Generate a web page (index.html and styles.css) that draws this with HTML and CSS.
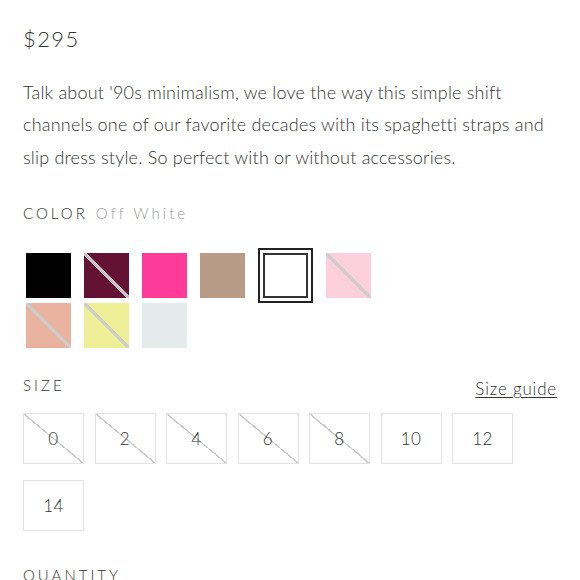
FILE: index.html
```html
<!DOCTYPE html>
<html lang="en">
<head>
<meta charset="utf-8">
<link rel="stylesheet" href="styles.css">
</head>
<body>
<main class="product">
  <div class="price">$295</div>
  <p class="desc">Talk about '90s minimalism, we love the way this simple shift channels one of our favorite decades with its spaghetti straps and slip dress style. So perfect with or without accessories.</p>

  <div class="label color-label">COLOR <span class="value">Off White</span></div>
  <div class="swatches">
    <span class="swatch black"></span>
    <span class="swatch burgundy na"></span>
    <span class="swatch hotpink"></span>
    <span class="swatch taupe"></span>
    <span class="selected"><span class="swatch white"></span></span>
    <span class="swatch lightpink na"></span>
    <span class="swatch peach na"></span>
    <span class="swatch yellow na"></span>
    <span class="swatch mist"></span>
  </div>

  <div class="size-head">
    <span class="label">SIZE</span>
    <a class="guide" href="#">Size guide</a>
  </div>
  <div class="sizes">
    <span class="size na">0</span>
    <span class="size na">2</span>
    <span class="size na">4</span>
    <span class="size na">6</span>
    <span class="size na">8</span>
    <span class="size">10</span>
    <span class="size">12</span>
    <span class="size">14</span>
  </div>

  <div class="label qty-label">QUANTITY</div>
</main>
</body>
</html>
```
FILE: styles.css
```css
html, body {
  margin: 0;
  padding: 0;
  background: #fff;
}
body {
  font-family: Lato, "Open Sans", sans-serif;
  font-weight: 300;
  color: #333;
}
.product {
  padding: 24px 23px 0 23px;
}
.price {
  font-size: 22px;
  line-height: 30px;
  letter-spacing: 1.4px;
  color: #333;
}
.desc {
  margin: 22px 0 0 0;
  font-size: 18px;
  line-height: 32.3px;
  color: #333;
  letter-spacing: 0.2px;
}
.label {
  font-size: 15px;
  line-height: 20px;
  letter-spacing: 3px;
  color: #333;
  font-weight: 300;
}
.color-label {
  margin-top: 30px;
}
.value {
  color: #999;
  margin-left: 1px;
}
.swatches {
  margin-top: 25px;
  padding-left: 3px;
  display: flex;
  flex-wrap: wrap;
  align-items: center;
  column-gap: 13px;
  width: 360px;
}
.swatch {
  display: block;
  width: 45px;
  height: 45px;
  box-sizing: border-box;
}
.swatch.na {
  background-image: linear-gradient(to top right, transparent calc(50% - 1.6px), rgba(205,205,205,0.95) calc(50% - 1.6px), rgba(205,205,205,0.95) calc(50% + 1.6px), transparent calc(50% + 1.6px));
}
.black { background-color: #000; }
.burgundy { background-color: #631234; }
.hotpink { background-color: #fe3b98; }
.taupe { background-color: #b89b86; }
.white { background-color: #fff; border: 2px solid #333; }
.lightpink { background-color: #fccfdc; }
.peach { background-color: #e8b29f; }
.yellow { background-color: #eeee96; }
.mist { background-color: #e5eaea; }
.selected {
  display: block;
  border: 2px solid #222;
  padding: 3px;
}
.size-head {
  margin-top: 27px;
  display: flex;
  justify-content: space-between;
  align-items: flex-start;
}
.guide {
  margin-top: 4px;
  font-size: 17px;
  line-height: 20px;
  color: #333;
  letter-spacing: 0.8px;
  text-decoration: underline;
  text-underline-offset: 2px;
  text-decoration-thickness: 1px;
}
.sizes {
  margin-top: 14px;
  display: flex;
  flex-wrap: wrap;
  column-gap: 10.5px;
  row-gap: 16px;
}
.size {
  width: 61px;
  height: 51px;
  box-sizing: border-box;
  border: 1px solid #e3e3e3;
  display: flex;
  align-items: center;
  justify-content: center;
  font-size: 17px;
  color: #333;
  letter-spacing: 0.5px;
}
.size.na {
  background-image: linear-gradient(to top right, transparent calc(50% - 0.6px), #c8c8c8 calc(50% - 0.6px), #c8c8c8 calc(50% + 0.6px), transparent calc(50% + 0.6px));
}
.qty-label {
  margin-top: 34px;
}
```
